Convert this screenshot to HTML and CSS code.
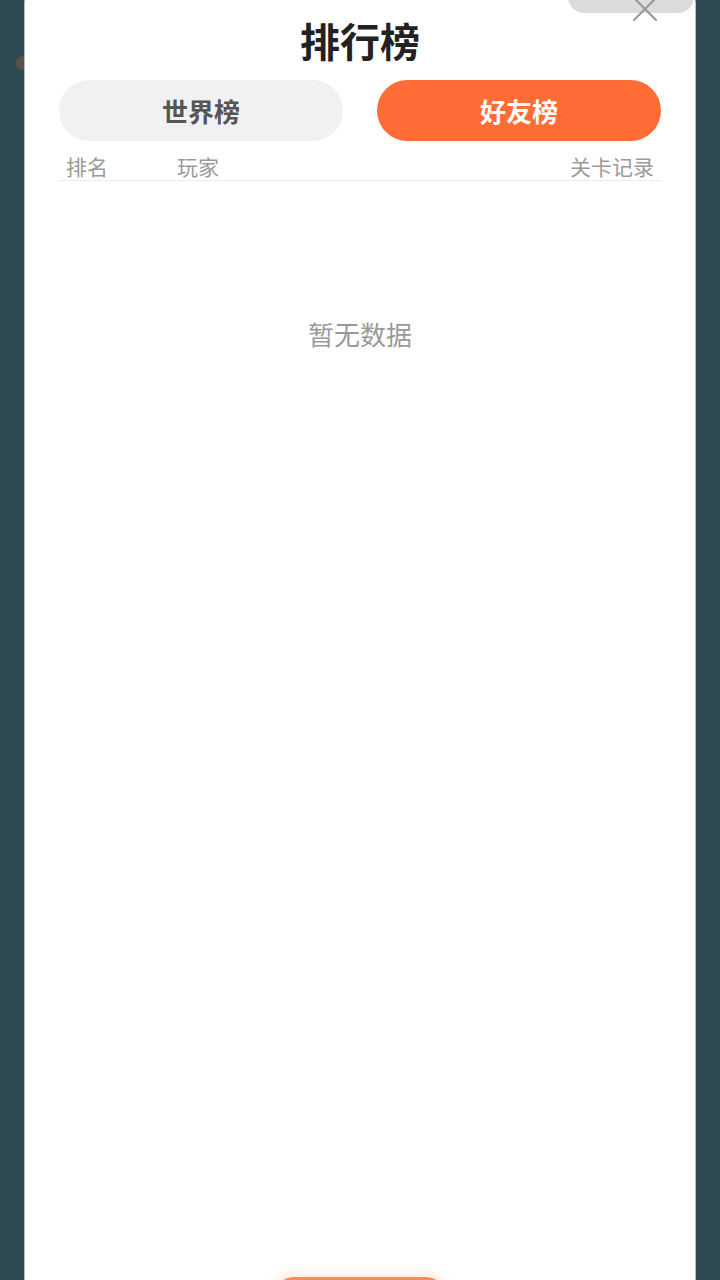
FILE: index.html
```html
<!DOCTYPE html>
<html lang="zh-CN">
<head>
<meta charset="utf-8">
<title>排行榜</title>
<link rel="stylesheet" href="styles.css">
</head>
<body>
<div class="bg-blob"></div>
<div class="panel">
  <div class="top-pill"></div>
  <svg class="close" width="26" height="26" viewBox="0 0 26 26"><path d="M2 2 L24 24 M24 2 L2 24" stroke="#9a9a9a" stroke-width="2.2" stroke-linecap="round" fill="none"/></svg>
  <h1 class="title">排行榜</h1>
  <div class="tabs">
    <div class="tab">世界榜</div>
    <div class="tab tab-active">好友榜</div>
  </div>
  <div class="head-row">
    <span class="col-rank">排名</span>
    <span class="col-player">玩家</span>
    <span class="col-record">关卡记录</span>
  </div>
  <div class="empty">暂无数据</div>
  <div class="bottom-btn"></div>
</div>
</body>
</html>
```
FILE: styles.css
```css
html, body {
  margin: 0;
  padding: 0;
  height: 1280px;
  overflow: hidden;
}
body {
  background: #2f4a53;
  font-family: "Noto Sans CJK SC", "Noto Sans", sans-serif;
  position: relative;
}
.bg-blob {
  position: absolute;
  left: 16px;
  top: 56px;
  width: 14px;
  height: 14px;
  border-radius: 50%;
  background: #5e5246;
}
.panel {
  position: relative;
  margin: -20px 0 0 25px;
  width: 670px;
  height: 1340px;
  background: #fff;
  border-radius: 24px 24px 0 0;
  box-sizing: border-box;
  padding: 37px 34px 0;
  display: flex;
  flex-direction: column;
  box-shadow: 1px 0 0 #b9c3c6, -1px 0 0 #b9c3c6;
}
.top-pill {
  position: absolute;
  left: 543px;
  top: 0;
  width: 126px;
  height: 33px;
  border-radius: 0 0 16px 16px;
  background: #dcdcdc;
}
.close {
  position: absolute;
  left: 607px;
  top: 16px;
}
.title {
  margin: 0;
  text-align: center;
  font-size: 40px;
  line-height: 46px;
  font-weight: 700;
  color: #222;
}
.tabs {
  margin-top: 17px;
  display: flex;
  justify-content: space-between;
}
.tab {
  width: 284px;
  height: 61px;
  border-radius: 31px;
  background: #f1f1f1;
  color: #555;
  font-size: 26px;
  font-weight: 700;
  display: flex;
  align-items: center;
  justify-content: center;
}
.tab-active {
  background: #ff6c35;
  color: #fff;
}
.head-row {
  height: 40px;
  box-sizing: border-box;
  padding: 11px 7px 0;
  border-bottom: 1px solid #ececec;
  display: flex;
  font-size: 21px;
  line-height: 28px;
  color: #9a9a9a;
}
.col-rank { width: 111px; }
.col-player { flex: 1; }
.empty {
  margin-top: 136px;
  text-align: center;
  font-size: 26px;
  line-height: 34px;
  color: #999;
  flex: 1;
}
.bottom-btn {
  align-self: center;
  width: 172px;
  height: 40px;
  margin-bottom: 3px;
  border-radius: 20px;
  background: #ff8a4f;
  box-shadow: 0 0 14px rgba(255, 150, 80, 0.35);
}
```
